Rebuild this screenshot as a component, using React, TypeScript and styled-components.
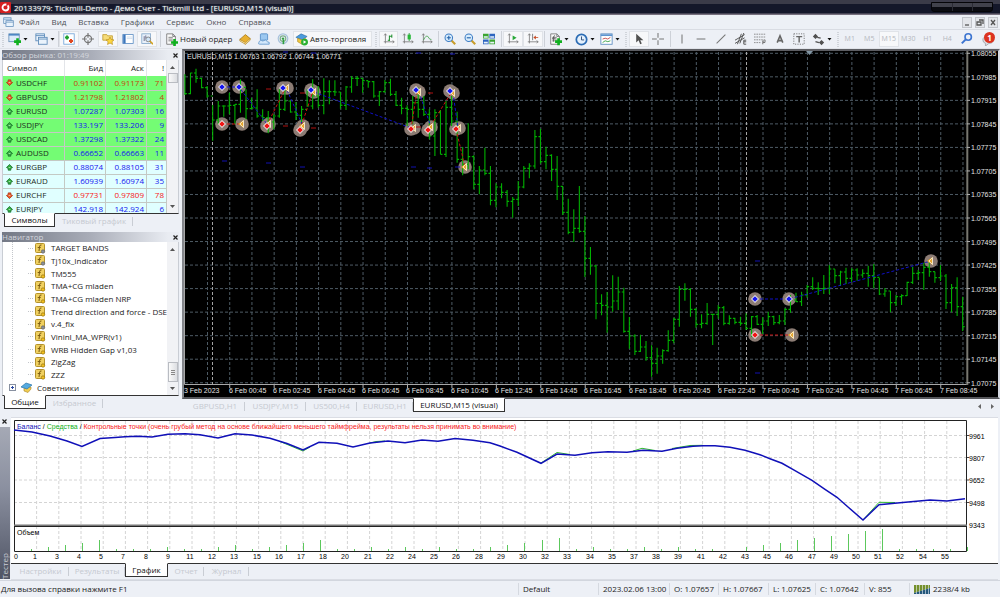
import React from "react";
import styled, { createGlobalStyle, css } from "styled-components";

const UI_FONT = `"Open Sans", "Noto Sans", sans-serif`;
const CHART_FONT = `"Liberation Sans", Arial, sans-serif`;

const Global = createGlobalStyle`
  * { box-sizing: border-box; }
  body { margin: 0; background: #edf0f6; }
  button, input { font: inherit; color: inherit; margin: 0; padding: 0; border: 0; background: none; }
`;

/* ---------- shell ---------- */

const Page = styled.div`
  display: flex;
  flex-direction: column;
  min-height: 100vh;
  font: 8px/12px ${UI_FONT};
  color: #1c1c1c;
  background: #edf0f6;
  overflow: hidden;
`;

const TitleBar = styled.header`
  display: flex;
  align-items: center;
  gap: 3px;
  height: 15px;
  color: #fff;
  background: linear-gradient(#3b3b49 0 4px, #14172a 4px 13px, #77707f 14px);
  text-shadow: 0 0 2px #9aa;
`;

const TitleText = styled.h1`
  flex: 1;
  margin: 0;
  font: inherit;
  font-weight: 500;
  white-space: nowrap;
`;

const CaptionButtons = styled.div`
  display: flex;
  margin: 0 7px 2px 0;
  height: 10px;
  border: 1px solid #050508;
  border-radius: 0 0 3px 3px;
  background: linear-gradient(#41424c 50%, #0b0c12 50%);
`;

const CaptionButton = styled.button`
  width: 20px;
  & + & {
    border-left: 1px solid #2c2d36;
  }
`;

const MenuBar = styled.nav`
  display: flex;
  align-items: center;
  gap: 12px;
  height: 15px;
  padding: 0 2px;
  color: #4d5057;
  border-bottom: 1px solid #d9dce3;
`;

const MenuItem = styled.button`
  white-space: nowrap;
`;

const MenuIcon = styled.span`
  display: flex;
  width: 12px;
  margin-right: -7px;
  padding-left: 1px;
`;

const MdiButtons = styled.div`
  display: flex;
  gap: 3px;
  margin-left: auto;
`;

const MdiButton = styled.button`
  display: flex;
  width: 10px;
  height: 11px;
  border: 1px solid #c2c5cb;
  background: #e3e5ea;
`;

/* ---------- toolbar ---------- */

const ToolBar = styled.div`
  display: flex;
  align-items: center;
  height: 19px;
  border-bottom: 1px solid #dfe2e8;
`;

const ToolGroup = styled.div<{ $w: number }>`
  display: flex;
  width: ${(p) => p.$w}px;
  height: 16px;
  & > * {
    flex: 1;
  }
`;

const pressedLook = css`
  background: #f7f8fa;
  box-shadow: inset 0 0 0 1px #e0e3e8;
`;

const ToolButton = styled.button<{ $pressed?: boolean; $muted?: boolean }>`
  display: flex;
  align-items: center;
  justify-content: center;
  gap: 2px;
  height: 16px;
  min-width: 0;
  white-space: nowrap;
  ${(p) => p.$muted && "color: #b4b7bd; font-size: 7px;"}
  ${(p) => p.$pressed && pressedLook}
`;

const TextTool = styled(ToolButton)<{ $w: number }>`
  justify-content: flex-start;
  width: ${(p) => p.$w}px;
  padding-left: 2px;
`;

const Separator = styled.span<{ $w: number }>`
  width: ${(p) => p.$w}px;
  height: 16px;
  background: linear-gradient(#cdd1d8, #cdd1d8) center / 1px 100% no-repeat;
`;

const Grip = styled.span<{ $w: number }>`
  width: ${(p) => p.$w}px;
  height: 15px;
  background: repeating-linear-gradient(#d0d4da 0 1px, transparent 1px 2px) center / 2px 100% no-repeat;
`;

const AlertButton = styled(ToolButton)`
  position: relative;
  width: 23px;
`;

const Badge = styled.span`
  position: absolute;
  left: 7px;
  top: 1px;
  width: 11px;
  height: 11px;
  border-radius: 50%;
  background: #dc3420;
  color: #fff;
  font-weight: 700;
  line-height: 11px;
  text-align: center;
`;

/* ---------- workspace ---------- */

const Workspace = styled.main`
  display: grid;
  grid-template-columns: 182px minmax(0, 1fr);
`;

const SideColumn = styled.aside`
  display: flex;
  flex-direction: column;
  gap: 3px;
  padding: 1px 3px 0 2px;
`;

const Panel = styled.section`
  display: flex;
  flex-direction: column;
`;

const PanelHead = styled.div`
  display: flex;
  align-items: center;
  justify-content: space-between;
  height: 10px;
  color: #d3d6dd;
  background: linear-gradient(90deg, #737885, #a9adb8 50%, #e9ecf2 94%);
`;

const CloseButton = styled.button`
  display: flex;
  width: 8px;
  height: 8px;
  align-items: center;
  justify-content: center;
`;

const PanelBody = styled.div<{ $h: number }>`
  display: flex;
  height: ${(p) => p.$h}px;
  background: #fff;
  border: solid #c9cdd4;
  border-width: 0 1px 0 1px;
  border-bottom: 1px solid #333;
  overflow: hidden;
`;

const ScrollBar = styled.div`
  position: relative;
  display: flex;
  flex-direction: column;
  align-items: center;
  width: 11px;
  padding: 6px 0 5px;
  background: #f1f2f5;
`;

const Thumb = styled.span<{ $h: number; $gap: string }>`
  width: 10px;
  height: ${(p) => p.$h}px;
  margin: ${(p) => p.$gap};
  border: 1px solid #b9bcc2;
  background: linear-gradient(90deg, #fafafa, #dcdee2);
`;

const GripThumb = styled(Thumb)`
  background: repeating-linear-gradient(#888 0 1px, transparent 1px 2px) center / 4px 5px no-repeat,
    linear-gradient(90deg, #fafafa, #dcdee2);
`;

const TabStrip = styled.div<{ $pad: number; $h: number }>`
  display: flex;
  height: ${(p) => p.$h}px;
  padding-left: ${(p) => p.$pad}px;
`;

const Tab = styled.button<{ $active?: boolean; $w: number }>`
  width: ${(p) => p.$w}px;
  height: 14px;
  line-height: 12px;
  white-space: nowrap;
  ${(p) =>
    p.$active
      ? css`
          color: #111;
          background: #fff;
          border: 1px solid #333;
          border-top-color: #fff;
          margin-top: -1px;
        `
      : css`
          color: #c5c9d0;
          background: linear-gradient(#c9cdd4, #c9cdd4) right / 1px 9px no-repeat;
        `}
`;

const QuoteTable = styled.table`
  flex: 1;
  height: 156px;
  border-collapse: collapse;
  table-layout: fixed;
  th {
    height: 16px;
    padding: 0 2px 0 4px;
    font-weight: 400;
    text-align: right;
    border-right: 1px solid #e3e5e9;
  }
  th:first-child {
    text-align: left;
  }
`;

const QuoteRow = styled.tr<{ $hot: boolean; $up: boolean }>`
  background: ${(p) => (p.$hot ? "#74fc74" : "#e0ffff")};
  td {
    height: 14px;
    padding: 0 2px 0 0;
    line-height: 12px;
    text-align: right;
    border: solid #c4c9c4;
    border-width: 0 1px 1px 0;
    color: ${(p) => (p.$up ? "#1414f0" : p.$hot ? "#c4420c" : "#f81414")};
  }
  td:first-child {
    text-align: left;
    color: #1c2c1c;
  }
`;

const SymbolCell = styled.span`
  display: flex;
  align-items: center;
  gap: 3px;
  padding-left: 3px;
`;

const Tree = styled.ul`
  display: grid;
  grid-template-rows: repeat(12, 1fr) 1px;
  flex: 1;
  min-width: 0;
  margin: 0;
  padding: 0;
  list-style: none;
  background: repeating-linear-gradient(#c3c6cb 0 1px, transparent 1px 2px) 9px 0 / 1px 138px no-repeat;
`;

const TreeItem = styled.li<{ $root?: boolean }>`
  display: flex;
  align-items: center;
  gap: ${(p) => (p.$root ? 4 : 5)}px;
  padding-left: ${(p) => (p.$root ? 6 : 25)}px;
  overflow: hidden;
  white-space: nowrap;
  svg {
    flex: none;
  }
`;

const ChartColumn = styled.div`
  display: flex;
  flex-direction: column;
`;

const ChartFrame = styled.div`
  background: #000;
  border: 2px solid;
  border-color: #5c5d62 #d6dae2 #55565a #85878c;
`;

const Plot = styled.svg`
  display: block;
  width: 100%;
  height: auto;
  font-family: ${CHART_FONT};
`;

const ChartTabs = styled.div`
  display: flex;
  align-items: flex-start;
  justify-content: space-between;
  height: 18px;
`;

const TabArrows = styled.div`
  display: flex;
  gap: 10px;
  padding: 5px 6px 0 0;
  button {
    display: flex;
  }
`;

/* ---------- tester ---------- */

const Tester = styled.section`
  display: grid;
  grid-template-columns: 11px minmax(0, 1fr);
  padding-right: 2px;
`;

const TesterRail = styled.div`
  display: flex;
  flex-direction: column;
  width: 10px;
`;

const RailLabel = styled.h2`
  flex: 1;
  margin: 2px 0 1px;
  padding-bottom: 1px;
  font: inherit;
  line-height: 10px;
  color: #c9ccd4;
  writing-mode: vertical-rl;
  transform: rotate(180deg);
  background: linear-gradient(#4f5464, #8b90a0 60%, #a5a9b5);
`;

const TesterBody = styled.div`
  border: 1px solid #dadde4;
  border-width: 1px 0;
`;

const TesterPlot = styled.div`
  background: #fff;
  border-bottom: 1px solid #333;
`;

const StatusBar = styled.footer`
  display: flex;
  align-items: center;
  height: 17px;
  border-top: 1px solid #d2d6de;
  white-space: nowrap;
`;

const StatusCell = styled.span<{ $w?: number }>`
  ${(p) => (p.$w ? `width: ${p.$w}px; padding-left: 4px; border-left: 1px solid #d5d9e0;` : "flex: 1; padding-left: 1px;")}
  display: flex;
  align-items: center;
  gap: 3px;
`;

/* ---------- icons ---------- */

type IconName = keyof typeof ICONS;

const plus = (x: number, y: number) => (
  <path d={`M${x - 4} ${y}h8M${x} ${y - 4}v8`} stroke="#10b020" strokeWidth="3" />
);
const axes = <path d="M3 1v12M1 11h13M1.500 3L3 1l1.500 2M12 9.500l2 1.500-2 1.500" stroke="#777" fill="none" />;
const doc = <path d="M2 1h7l3 3v9H2zM4 5h5M4 7h5M4 9h5M9 1v3h3" fill="#fafafa" stroke="#777" />;

const ICONS = {
  newChart: (
    <>
      <rect x="1" y="1" width="12" height="9" fill="#dceafa" stroke="#6d93b8" />
      <path d="M1 2h12" stroke="#4d86c4" strokeWidth="2" />
      {plus(11, 10)}
    </>
  ),
  profiles: (
    <g fill="#eaf3fc" stroke="#5c8ab8">
      <rect x="1" y="1" width="10" height="8" />
      <rect x="4" y="5" width="10" height="8" />
      <path d="M1 3h10M4 7h10" />
    </g>
  ),
  market: (
    <>
      <rect x="1" y="1" width="13" height="13" fill="#fff" stroke="#6ba0d8" />
      <path d="M2.500 5.500h5M5 3v5" stroke="#20a030" strokeWidth="2.500" />
      <path d="M7.500 10h5M10 7.500v5" stroke="#e04820" strokeWidth="2.500" />
    </>
  ),
  target: (
    <g fill="none" stroke="#777" strokeWidth="1.500">
      <circle cx="7.500" cy="7.500" r="4.500" />
      <path d="M7.500 0v6M7.500 9v6M0 7.500h6M9 7.500h6" />
    </g>
  ),
  navigator: (
    <>
      <path d="M1 2h5l1 1.500h6V9H1z" fill="#f6dc78" stroke="#c09a30" />
      <path d="M10 5l1.600 3.200 3.400.4-2.500 2.300.7 3.400-3.200-1.700-3.100 1.700.7-3.400L5 8.600l3.400-.4z" fill="#fcd640" stroke="#b88a20" strokeWidth=".8" />
    </>
  ),
  terminal: (
    <>
      <rect x="1" y="2" width="13" height="11" fill="#fff" stroke="#5a8cc4" />
      <path d="M3 2v11" stroke="#3c76bc" strokeWidth="3" />
      <path d="M6 5h7M6 7h7" stroke="#c8d8ea" />
    </>
  ),
  tester: (
    <>
      <rect x="1" y="1" width="11" height="12" fill="#e8f0fa" stroke="#7fa4c8" />
      <path d="M4 4v6M6 3v4M8 5v4" stroke="#557" />
      <circle cx="9" cy="8" r="3" fill="#cfe4f8" stroke="#777" />
      <path d="M11 10l4 4" stroke="#d0a020" strokeWidth="2" />
    </>
  ),
  order: (
    <>
      {doc}
      {plus(11, 11)}
    </>
  ),
  book: (
    <>
      <path d="M1 8l7-6 6 5-6 7z" fill="#e8b030" stroke="#a87818" />
      <path d="M1 8l7 4 6-5v2l-6 5-7-4z" fill="#fbe7a0" stroke="#a87818" strokeWidth=".7" />
    </>
  ),
  vps: (
    <>
      <rect x="3" y="1" width="9" height="8" rx="1" fill="#9cc8f0" stroke="#4c88c4" />
      <path d="M1 12q1-4 5-2 4-3 6 1 3 0 2 3H2q-2 0-1-2z" fill="#d4e8fb" stroke="#5c94cc" />
    </>
  ),
  signal: (
    <g fill="none">
      <circle cx="7.500" cy="7" r="6" stroke="#a9c3dc" strokeWidth="1.500" />
      <circle cx="7.500" cy="7" r="3.500" stroke="#7fae8c" strokeWidth="1.500" />
      <circle cx="7.500" cy="7" r="1.500" fill="#30a040" />
      <path d="M8 8v6" stroke="#30a040" strokeWidth="2" />
    </g>
  ),
  auto: (
    <>
      <path d="M1 5l6-4 7 3-6 4z" fill="#4c9cdc" stroke="#2c6ca4" strokeWidth=".7" />
      <path d="M3 6v4l5 3 4-5V6L8 8z" fill="#f0c840" stroke="#a88420" strokeWidth=".7" />
      <circle cx="11" cy="10.500" r="4" fill="#28b030" />
      <path d="M9.800 8.500l3.200 2-3.200 2z" fill="#fff" />
    </>
  ),
  bars: (
    <>
      {axes}
      <path d="M8 3v7M6 9h2M8 4h3M11 2v4" stroke="#209030" strokeWidth="1.300" />
    </>
  ),
  candles: (
    <>
      {axes}
      <path d="M9 0v10" stroke="#209030" />
      <rect x="7" y="2" width="4" height="6" fill="#28b838" />
    </>
  ),
  line: (
    <>
      {axes}
      <path d="M3 9q4-8 6-4t4 3" stroke="#40a048" fill="none" />
    </>
  ),
  zoomIn: (
    <>
      <path d="M9 9l5 5" stroke="#c89c28" strokeWidth="2.500" />
      <circle cx="6" cy="6" r="4.700" fill="#d8ecfc" stroke="#3c7cc4" strokeWidth="1.300" />
      <path d="M3.500 6h5M6 3.500v5" stroke="#2060a8" strokeWidth="1.400" />
    </>
  ),
  zoomOut: (
    <>
      <path d="M9 9l5 5" stroke="#c89c28" strokeWidth="2.500" />
      <circle cx="6" cy="6" r="4.700" fill="#d8ecfc" stroke="#3c7cc4" strokeWidth="1.300" />
      <path d="M3.500 6h5" stroke="#2060a8" strokeWidth="1.400" />
    </>
  ),
  tile: (
    <>
      <path d="M0 1h7v6H0zM8 8h7v6H8z" fill="#3aa430" />
      <path d="M8 1h7v6H8zM0 8h7v6H0z" fill="#2c64c0" />
      <path d="M1 4h5v2H1zM9 4h5v2H9zM1 11h5v2H1zM9 11h5v2H9z" fill="#e8f2fa" />
    </>
  ),
  scroll: (
    <>
      {axes}
      <path d="M7 3l5 3-5 3z" fill="#28a838" />
    </>
  ),
  shift: (
    <>
      {axes}
      <path d="M7 1v8" stroke="#666" />
      <path d="M8 5.500l3-2.500v2h3v1h-3v2z" fill="#c84820" />
    </>
  ),
  indicators: (
    <>
      {doc}
      <path d="M7 3q-2 0-2 3v4M3.500 6h4" stroke="#555" fill="none" />
      {plus(11, 10)}
    </>
  ),
  clock: (
    <>
      <circle cx="7.500" cy="7.500" r="6" fill="#e4f0fc" stroke="#2c6cb4" strokeWidth="2" />
      <path d="M7.500 4v4h3" stroke="#1c3c6c" fill="none" />
    </>
  ),
  template: (
    <>
      <rect x="1" y="1" width="13" height="12" fill="#fff" stroke="#5c8cc0" />
      <path d="M1 2.500h13" stroke="#5c94d0" strokeWidth="2" />
      <path d="M3 7l3-1 3 1 3-2" stroke="#c04040" fill="none" />
      <path d="M3 11l3-2 3 1 3-1" stroke="#30a040" fill="none" />
    </>
  ),
  cursor: <path d="M4 1v11l3-3 2 5 2-1-2-4h4z" fill="#505050" />,
  cross: <path d="M7.500 0v6M7.500 9v6M0 7.500h6M9 7.500h6" stroke="#777" strokeWidth="1.300" />,
  vline: <path d="M7.500 2v11" stroke="#777" strokeWidth="1.300" />,
  hline: <path d="M2 7.500h11" stroke="#777" strokeWidth="1.300" />,
  trend: <path d="M2 13L13 2" stroke="#777" strokeWidth="1.300" />,
  channel: (
    <path d="M0 9l12-7M0 13l12-7M3 14L8 1M6 13L11 0M11 9v5h3M11 11h3M11 9h3" stroke="#555" fill="none" strokeWidth="1.200" />
  ),
  fibo: (
    <g stroke="#777" fill="none">
      <path d="M0 1.500h15M0 5h15M0 8.500h15M0 12h9" strokeDasharray="2 1" />
      <path d="M11 14v-4h4M11 12h3" strokeWidth="1.300" />
    </g>
  ),
  textA: <path d="M4 12l3.500-8.500L11 12M5.500 9.500h4" stroke="#666" strokeWidth="2" fill="none" />,
  label: (
    <g stroke="#666" fill="none">
      <rect x="1" y="1" width="13" height="13" strokeDasharray="1.500 1.500" />
      <path d="M4 4.500h7.500M7.700 4v8" strokeWidth="1.800" />
    </g>
  ),
  arrows: (
    <g fill="#505050">
      <path d="M4 1l3 3-3 3-3-3zM11 8l3 3-3 3-3-3z" />
      <path d="M6 5l4 1M4 10l4 1" stroke="#505050" strokeWidth="1.500" />
    </g>
  ),
  search: (
    <g fill="none" stroke="#3c74d0" strokeWidth="2">
      <circle cx="9" cy="5" r="4" />
      <path d="M6 8l-5 5" strokeWidth="2.500" />
    </g>
  ),
  bubble: <path d="M1 8q0-4 6-4t6 4-5 4l-4 3v-3Q1 11 1 8z" fill="#dcdee2" stroke="#a0a4aa" />,
};

const Icon = ({ name, size = 12 }: { name: IconName; size?: number }) => (
  <svg width={size} height={size} viewBox="0 0 15 15" aria-hidden="true">
    {ICONS[name]}
  </svg>
);

const Caret = () => (
  <svg width="5" height="3" viewBox="0 0 5 3" aria-hidden="true">
    <path d="M.5 0h4L2.500 2.500z" fill="#111" />
  </svg>
);

const ScrollArrow = ({ up }: { up?: boolean }) => (
  <svg width="5" height="3" viewBox="0 0 5 3" aria-hidden="true">
    <path d={up ? "M0 3h5L2.500 0z" : "M0 0h5L2.500 3z"} fill="#555" />
  </svg>
);

const CrossGlyph = () => (
  <svg width="5" height="5" viewBox="0 0 5 5" aria-hidden="true">
    <path d="M.5.5l4 4M4.500.5l-4 4" stroke="#222" strokeWidth="1.200" />
  </svg>
);

const Direction = ({ up }: { up: boolean }) => (
  <svg width="7" height="7" viewBox="0 0 8 8" aria-hidden="true">
    <path
      d={up ? "M4 .5L7.500 4 5.500 5v2h-3V5L.5 4z" : "M4 7.500L7.500 4 5.500 3V1h-3v2L.5 4z"}
      fill={up ? "#30b040" : "#f05828"}
      stroke={up ? "#1c6c2c" : "#a83010"}
      strokeWidth=".9"
    />
    <path d="M3 4h2" stroke="#d8f0d0" strokeWidth=".8" />
  </svg>
);

const ScriptIcon = ({ grey }: { grey?: boolean }) => (
  <svg width="18" height="11" viewBox="0 0 18 11" aria-hidden="true">
    <path d="M0 5.500h6" stroke="#c3c6cb" strokeDasharray="1 1" />
    <rect x="7.500" y=".5" width="9" height="9" rx="1" fill="#f0d060" stroke="#b4922c" />
    <path d="M13.500 2q-2-.5-2 2L11 8M9.700 4.500h3" stroke="#7c5c10" fill="none" />
    <circle cx="15" cy="8.500" r="1.700" fill={grey ? "#8c9098" : "#f4c020"} stroke={grey ? "#60646c" : "#947410"} strokeWidth=".7" />
  </svg>
);

/* ---------- data ---------- */

const QUOTES: [string, string, string, number, boolean][] = [
  ["USDCHF", "0.91102", "0.91173", 71, false],
  ["GBPUSD", "1.21798", "1.21802", 4, false],
  ["EURUSD", "1.07287", "1.07303", 16, true],
  ["USDJPY", "133.197", "133.206", 9, true],
  ["USDCAD", "1.37298", "1.37322", 24, true],
  ["AUDUSD", "0.66652", "0.66663", 11, true],
  ["EURGBP", "0.88074", "0.88105", 31, true],
  ["EURAUD", "1.60939", "1.60974", 35, true],
  ["EURCHF", "0.97731", "0.97809", 78, false],
  ["EURJPY", "142.918", "142.924", 6, true],
];

const SCRIPTS = [
  "TARGET BANDS",
  "Tj10x_Indicator",
  "TM555",
  "TMA+CG mladen",
  "TMA+CG mladen NRP",
  "Trend direction and force - DSEI",
  "v.4_fix",
  "VininI_MA_WPR(v1)",
  "WRB Hidden Gap v1,03",
  "ZigZag",
  "ZZZ",
];
const GREY_SCRIPTS = [0, 1, 6];

/* High, low and close of each bar, in thirds of a chart unit below the top. */
const BARS: [number, number, number][] = [
  [85, 147, 143], [80, 145, 81], [68, 110, 97], [95, 127, 125], [120, 155, 150],
  [177, 284, 222], [165, 235, 180], [178, 212, 180], [140, 205, 178], [175, 235, 175],
  [100, 200, 124], [130, 220, 188], [155, 190, 186], [130, 215, 210], [190, 225, 215],
  [195, 262, 228], [205, 250, 210], [130, 215, 190], [130, 195, 165], [165, 200, 198],
  [168, 222, 208], [180, 235, 190], [130, 182, 180], [100, 190, 150], [120, 185, 178],
  [97, 205, 137], [103, 175, 137], [103, 150, 138], [138, 188, 178], [120, 192, 123],
  [90, 140, 97], [90, 120, 97], [97, 140, 104], [105, 125, 107], [105, 155, 150],
  [135, 180, 137], [102, 140, 110], [98, 150, 145], [135, 180, 178], [155, 205, 187],
  [178, 240, 190], [150, 235, 170], [125, 215, 190], [150, 210, 205], [190, 280, 270],
  [190, 330, 200], [192, 325, 325], [165, 333, 184], [150, 240, 225], [197, 350, 340],
  [303, 388, 355], [232, 370, 332], [328, 430, 415], [360, 445, 372], [305, 388, 382],
  [360, 478, 463], [412, 484, 423], [412, 457, 439], [432, 482, 466], [453, 515, 460],
  [405, 480, 423], [360, 427, 367], [352, 397, 360], [252, 368, 272], [248, 353, 347],
  [302, 370, 328], [325, 405, 370], [330, 462, 421], [420, 507, 499], [458, 565, 559],
  [490, 588, 547], [420, 560, 556], [510, 693, 637], [603, 686, 660], [657, 820, 772],
  [745, 808, 778], [738, 860, 783], [688, 797, 765], [692, 792, 738], [725, 860, 856],
  [813, 908, 870], [865, 927, 916], [866, 918, 903], [885, 944, 935], [898, 992, 952],
  [905, 983, 930], [910, 953, 914], [853, 917, 883], [815, 892, 820], [720, 842, 730],
  [712, 764, 730], [727, 812, 790], [787, 845, 835], [805, 847, 832], [771, 836, 805],
  [805, 897, 805], [777, 818, 785], [780, 838, 832], [808, 836, 817], [815, 835, 829],
  [812, 839, 832], [802, 852, 847], [810, 872, 812], [807, 837, 835], [814, 864, 825],
  [797, 840, 812], [809, 837, 830], [807, 835, 825], [787, 837, 790], [747, 800, 762],
  [740, 768, 767], [737, 780, 747], [717, 755, 722], [694, 732, 727], [709, 747, 728],
  [687, 744, 727], [657, 744, 669], [670, 712, 689], [674, 720, 678], [665, 714, 697],
  [667, 707, 672], [667, 704, 687], [670, 695, 682], [659, 722, 689], [654, 727, 694],
  [696, 747, 744], [726, 752, 735], [735, 799, 770], [747, 780, 752], [745, 777, 749],
  [707, 750, 709], [662, 714, 682], [672, 702, 680], [650, 732, 664], [647, 692, 677],
  [677, 710, 695], [657, 705, 690], [684, 789, 770], [714, 799, 725], [694, 810, 782],
  [752, 855, 842],
];

const PRICES = [
  "1.08055", "1.07985", "1.07915", "1.07845", "1.07775", "1.07705", "1.07635", "1.07565",
  "1.07495", "1.07425", "1.07355", "1.07285", "1.07215", "1.07145", "1.07075",
];

const TIMES = [
  "6 Feb 00:45", "6 Feb 02:45", "6 Feb 04:45", "6 Feb 06:45", "6 Feb 08:45", "6 Feb 10:45",
  "6 Feb 12:45", "6 Feb 14:45", "6 Feb 16:45", "6 Feb 18:45", "6 Feb 20:45", "6 Feb 22:45",
  "7 Feb 00:45", "7 Feb 02:45", "7 Feb 04:45", "7 Feb 06:45", "7 Feb 08:45",
];

type Kind = "b" | "r" | "y";
const MARKERS: [Kind, number, number][] = [
  ["b", 222, 87], ["b", 239, 87], ["y", 287, 88], ["b", 283, 88], ["y", 314, 92], ["b", 311, 90],
  ["y", 419, 92], ["b", 416, 90], ["y", 453, 93], ["b", 450, 91], ["r", 222, 124], ["y", 242, 124],
  ["y", 269, 124], ["r", 267, 126], ["y", 303, 126], ["r", 300, 130], ["y", 414, 128], ["r", 411, 129],
  ["y", 431, 127], ["r", 428, 130], ["y", 459, 128], ["r", 456, 129], ["y", 465, 167],
  ["b", 755, 299], ["b", 789, 299], ["r", 755, 335], ["y", 792, 335], ["y", 931, 261],
];

const BLUE_PATHS =
  "M222 87H239L267 124M287 90L303 126M314 92L411 128M419 92L431 127M453 93L458 128M755 299H789L931 261";
const RED_PATHS =
  "M222 124H242M267 125L285 89M300 130L313 91M411 129L417 91M428 130L451 93M456 129L465 167M755 335H792";
const BLUE_TICKS = [
  [224, 161], [268, 163], [302, 167], [413, 167], [429, 168], [457, 167], [285, 52], [313, 53],
  [418, 53], [452, 54], [757, 261], [757, 373],
];
const RED_TICKS = [
  [268, 89], [302, 93], [285, 126], [313, 128], [430, 93], [418, 127],
];

const TRADE_NUMBERS = [
  0, 1, 3, 4, 5, 7, 8, 9, 11, 12, 13, 15, 16, 17, 18, 20, 21, 22, 24, 25, 26, 28, 29, 30, 32, 33,
  34, 35, 37, 38, 39, 41, 42, 43, 45, 46, 47, 49, 50, 51, 52, 54, 55,
];

const BALANCE =
  "14,430 32,432 50,436 67,441 82,446.500 100,438.500 115,437.500 125,436.700 138,436.300 152,437 168,434.300 185,433.700 200,434.700 218,438 235,433.700 252,435 270,438.300 287,443.500 303,450 319,442.300 337,443.300 353,447 370,443 388,441 405,442.700 422,440 438,441.300 455,438.500 473,440.300 490,442.700 500,446 517,452.300 541,463.300 557,454 575,455.300 592,452.700 608,451.700 627,452.300 643,450.300 662,451.300 677,448.300 693,446.300 703,445.700 715,445.700 730,447.300 745,450.300 760,454.700 770,458.700 782,463.300 795,470.700 812,480.300 825,489.300 837,497.300 848,507 863,520 879,504.700 900,502.700 930,500 947,501 965,498.700";

const VOLUMES = [
  2, 4, 6, 8, 11, 2, 2, 2, 4, 2, 2, 4, 6, 2, 4, 6, 8, 11, 2, 2, 4, 2, 4, 2, 4, 2, 2, 4, 6, 8, 11,
  13, 2, 4, 2, 2, 4, 2, 4, 2, 2, 4, 6, 8, 11, 13, 15, 17, 20, 22, 2, 2, 2, 2, 4,
];

/* ---------- charts ---------- */

const gridX = (k: number) => 207.5 + k * 22.22;
const gridY = (k: number) => 53.3 + k * 23.53;
const barX = (i: number) => 184.9 + i * 5.5555;
const barY = (v: number) => 46 + v / 3;

const Marker = ({ kind, x, y }: { kind: Kind; x: number; y: number }) => (
  <g transform={`translate(${x} ${y})`}>
    {kind === "y" ? (
      <>
        <path d="M-4 0L1.500-4V4z" fill="#e8a830" />
        <path d="M-2 0L1.500-3.500V3.500z" fill="none" stroke="#f8ecd0" strokeWidth=".9" />
      </>
    ) : (
      <>
        <path d="M-4 0L0-4 4 0 0 4z" fill="#f0ecec" />
        <path d="M-2.800 0L0-2.800 2.800 0 0 2.800z" fill={kind === "b" ? "#1414f0" : "#f01414"} />
      </>
    )}
  </g>
);

const PriceChart = () => (
  <Plot viewBox="184 51 814 346" role="img" aria-label="EURUSD,M15">
    <g stroke="#4e5b65" strokeWidth="1" strokeDasharray="3 2">
      {Array.from({ length: 35 }, (_, k) => (
        <path key={k} d={`M${gridX(k)} 52V384`} />
      ))}
      {PRICES.map((p, k) => (
        <path key={p} d={`M185 ${gridY(k)}H967`} />
      ))}
    </g>
    <path d="M212.500 52V384M746.500 52V384" stroke="#a4a4a4" strokeDasharray="3 2" />
    <path d="M184.500 51V384.500H967.500" stroke="#a8a8a8" fill="none" />
    <path d="M967.300 51V385" stroke="#77776f" strokeWidth="2" />
    <path
      d={PRICES.map((_, k) => `M967 ${gridY(k)}h3`).join("") + TIMES.map((_, k) => `M${gridX(2 * k + 1)} 385v3`).join("")}
      stroke="#b0b0b0"
    />
    <path d="M806 51h7l-3.500 4z" fill="#8296a4" />
    <g fill="#8c7c74">
      {MARKERS.map(([, x, y]) => (
        <circle key={`${x}-${y}`} cx={x} cy={y} r="6.800" />
      ))}
    </g>
    <path
      d={BARS.map(([h, l, c], i) => {
        const open = i ? `M${barX(i) - 2} ${barY(BARS[i - 1][2])}h2` : "";
        return `M${barX(i)} ${barY(h)}V${barY(l)}${open}M${barX(i)} ${barY(c)}h2`;
      }).join("")}
      stroke="#00b000"
      fill="none"
      strokeWidth="1.100"
    />
    <path d={BLUE_PATHS} stroke="#1010c8" fill="none" strokeDasharray="3 2" />
    <path d={RED_PATHS} stroke="#c81010" fill="none" strokeDasharray="3 2" />
    <path d={BLUE_TICKS.map(([x, y]) => `M${x - 2} ${y}h5`).join("")} stroke="#1010b0" />
    <path d={RED_TICKS.map(([x, y]) => `M${x - 2} ${y}h5`).join("")} stroke="#b01010" />
    {MARKERS.map(([kind, x, y]) => (
      <Marker key={`${x}-${y}`} kind={kind} x={x} y={y} />
    ))}
    <g fill="#e4e4e4" fontSize="7">
      <text x="187" y="59">
        EURUSD,M15 1.06763 1.06792 1.06744 1.06771
      </text>
      {PRICES.map((p, k) => (
        <text key={p} x="971" y={Math.round(gridY(k)) + 3}>
          {p}
        </text>
      ))}
      <text x="184" y="393">
        3 Feb 2023
      </text>
      {TIMES.map((t, k) => (
        <text key={t} x={Math.round(gridX(2 * k + 1)) - 1} y="393">
          {t}
        </text>
      ))}
    </g>
  </Plot>
);

const testX = (k: number) => 14.4 + k * 22.2;

const BalanceChart = () => (
  <Plot viewBox="11 418 987 145" role="img" aria-label="Баланс">
    <g stroke="#d4d4d4" strokeDasharray="3 2">
      {TRADE_NUMBERS.slice(1).map((n, k) => (
        <path key={n} d={`M${testX(k + 1)} 421V551`} />
      ))}
      {[435.500, 457.500, 480, 502.500].map((y) => (
        <path key={y} d={`M14 ${y}H967`} />
      ))}
    </g>
    <path
      d={VOLUMES.map((v, k) => `M${Math.floor(31.4 + k * 17.02 + (k > 40 ? 17 : 0))}.500 551v-${v}`).join("")}
      stroke="#5cc85c"
    />
    <path d="M14.500 420.500H966.500V551.500H14.500z" stroke="#222" fill="none" />
    <path d="M14 525.500H967" stroke="#777" strokeWidth="2" />
    <path d="M14 526.500H967" stroke="#222" />
    <path d="M967 435.500h2M967 457.500h2M967 480h2M967 502.500h2" stroke="#444" />
    <path
      d="M280 441.500L303 451L310 447M370 443L376 441.500 385 441M541 463L557 452.500 570 454.500M633 451L642 448.300 655 450.500M672 448.500L690 445.500 703 445.300M863 520L879 502.300 895 502.500"
      stroke="#30b830"
      fill="none"
    />
    <polyline points={BALANCE} stroke="#1010b8" strokeWidth="1.500" fill="none" />
    <g fontSize="7">
      <text x="17" y="429">
        <tspan fill="#1010b8">Баланс</tspan> / <tspan fill="#10b020">Средства</tspan> /{" "}
        <tspan fill="#f81818">
          Контрольные точки (очень грубый метод на основе ближайшего меньшего таймфрейма, результаты нельзя принимать во внимание)
        </tspan>
      </text>
      <text x="17" y="535">
        Объем
      </text>
      {["9961", "9807", "9652", "9498", "9343"].map((t, k) => (
        <text key={t} x="969" y={439 + Math.round(k * 22.2)}>
          {t}
        </text>
      ))}
      {TRADE_NUMBERS.map((n, k) => (
        <text key={n} x={k ? Math.round(testX(k)) - 2 : 16} y="559" textAnchor="middle">
          {n}
        </text>
      ))}
    </g>
  </Plot>
);

/* ---------- page ---------- */

const Tool = ({ icon, label, pressed, menu }: { icon: IconName; label: string; pressed?: boolean; menu?: boolean }) => (
  <ToolButton aria-label={label} $pressed={pressed} aria-pressed={pressed}>
    <Icon name={icon} size={menu ? 13 : 12} />
    {menu && <Caret />}
  </ToolButton>
);

export default function App() {
  return (
    <Page>
      <Global />
      <TitleBar>
        <svg width="11" height="11" viewBox="0 0 11 11" aria-hidden="true">
          <rect width="11" height="11" rx="1" fill="#d42020" />
          <circle cx="5.500" cy="5.500" r="3" fill="none" stroke="#fff" strokeWidth="1.800" />
          <path d="M7 0l2 3-3 1z" fill="#d42020" />
        </svg>
        <TitleText>20133979: Tickmill-Demo - Демо Счет - Tickmill Ltd - [EURUSD,M15 (visual)]</TitleText>
        <CaptionButtons>
          <CaptionButton aria-label="Свернуть" />
          <CaptionButton aria-label="Развернуть" />
          <CaptionButton aria-label="Закрыть" />
        </CaptionButtons>
      </TitleBar>

      <MenuBar>
        <MenuIcon>
          <Icon name="profiles" size={11} />
        </MenuIcon>
        {["Файл", "Вид", "Вставка", "Графики", "Сервис", "Окно", "Справка"].map((m) => (
          <MenuItem key={m}>{m}</MenuItem>
        ))}
        <MdiButtons>
          {["M2 7h4", "M3 2h4v4M1 4h4v3H1z", "M2 2l4 5M6 2L2 7"].map((d) => (
            <MdiButton key={d} aria-label="Окно">
              <svg width="8" height="9" viewBox="0 0 8 9" aria-hidden="true">
                <path d={d} stroke="#555" strokeWidth="1.300" fill="none" />
              </svg>
            </MdiButton>
          ))}
        </MdiButtons>
      </MenuBar>

      <ToolBar>
        <Grip $w={5} />
        <ToolGroup $w={53}>
          <Tool icon="newChart" label="Новый график" menu />
          <Tool icon="profiles" label="Профили" menu />
        </ToolGroup>
        <Separator $w={1} />
        <ToolGroup $w={98}>
          <Tool icon="market" label="Обзор рынка" pressed />
          <Tool icon="target" label="Окно данных" />
          <Tool icon="navigator" label="Навигатор" pressed />
          <Tool icon="terminal" label="Терминал" />
          <Tool icon="tester" label="Тестер" pressed />
        </ToolGroup>
        <Separator $w={6} />
        <TextTool $w={72}>
          <Icon name="order" size={13} />
          Новый ордер
        </TextTool>
        <ToolGroup $w={58}>
          <Tool icon="book" label="MetaEditor" />
          <Tool icon="vps" label="VPS" />
          <Tool icon="signal" label="Сигналы" />
        </ToolGroup>
        <TextTool $w={79} $pressed>
          <Icon name="auto" size={13} />
          Авто-торговля
        </TextTool>
        <Grip $w={7} />
        <ToolGroup $w={58}>
          <Tool icon="bars" label="Бары" pressed />
          <Tool icon="candles" label="Свечи" />
          <Tool icon="line" label="Линия" />
        </ToolGroup>
        <Separator $w={3} />
        <ToolGroup $w={59}>
          <Tool icon="zoomIn" label="Увеличить" />
          <Tool icon="zoomOut" label="Уменьшить" />
          <Tool icon="tile" label="Окна мозаикой" />
        </ToolGroup>
        <Separator $w={4} />
        <ToolGroup $w={40}>
          <Tool icon="scroll" label="Автопрокрутка" pressed />
          <Tool icon="shift" label="Сдвиг графика" pressed />
        </ToolGroup>
        <Separator $w={3} />
        <ToolGroup $w={77}>
          <Tool icon="indicators" label="Индикаторы" menu />
          <Tool icon="clock" label="Периоды" menu />
          <Tool icon="template" label="Шаблоны" menu />
        </ToolGroup>
        <Grip $w={6} />
        <ToolGroup $w={39}>
          <Tool icon="cursor" label="Курсор" pressed />
          <Tool icon="cross" label="Перекрестие" />
        </ToolGroup>
        <Separator $w={4} />
        <ToolGroup $w={137}>
          <Tool icon="vline" label="Вертикальная линия" />
          <Tool icon="hline" label="Горизонтальная линия" />
          <Tool icon="trend" label="Трендовая линия" />
          <Tool icon="channel" label="Канал" />
          <Tool icon="fibo" label="Фибоначчи" />
          <Tool icon="textA" label="Текст" />
          <Tool icon="label" label="Метка" />
        </ToolGroup>
        <ToolGroup $w={26}>
          <Tool icon="arrows" label="Стрелки" menu />
        </ToolGroup>
        <Grip $w={5} />
        <ToolGroup $w={117}>
          {["M1", "M5", "M15", "M30", "H1", "H4"].map((t) => (
            <ToolButton key={t} $muted $pressed={t === "M15"}>
              {t}
            </ToolButton>
          ))}
        </ToolGroup>
        <ToolGroup $w={20}>
          <Tool icon="search" label="Поиск" />
        </ToolGroup>
        <AlertButton aria-label="Сообщения">
          <Icon name="bubble" size={13} />
          <Badge>1</Badge>
        </AlertButton>
      </ToolBar>

      <Workspace>
        <SideColumn>
          <Panel>
            <PanelHead>
              <span>Обзор рынка: 01:19:49</span>
              <CloseButton aria-label="Закрыть">
                <CrossGlyph />
              </CloseButton>
            </PanelHead>
            <PanelBody $h={154}>
              <QuoteTable>
                <colgroup>
                  <col />
                  <col width="41" />
                  <col width="41" />
                  <col width="20" />
                </colgroup>
                <thead>
                  <tr>
                    <th>Символ</th>
                    <th>Бид</th>
                    <th>Аск</th>
                    <th>!</th>
                  </tr>
                </thead>
                <tbody>
                  {QUOTES.map(([symbol, bid, ask, spread, up], i) => (
                    <QuoteRow key={symbol} $hot={i < 6} $up={up}>
                      <td>
                        <SymbolCell>
                          <Direction up={up} />
                          {symbol}
                        </SymbolCell>
                      </td>
                      <td>{bid}</td>
                      <td>{ask}</td>
                      <td>{spread}</td>
                    </QuoteRow>
                  ))}
                </tbody>
              </QuoteTable>
              <ScrollBar>
                <ScrollArrow up />
                <Thumb $h={10} $gap="4px 0 auto" />
                <ScrollArrow />
              </ScrollBar>
            </PanelBody>
            <TabStrip $pad={2} $h={15}>
              <Tab $active $w={51}>
                Символы
              </Tab>
              <Tab $w={78}>Тиковый график</Tab>
            </TabStrip>
          </Panel>

          <Panel>
            <PanelHead>
              <span>Навигатор</span>
              <CloseButton aria-label="Закрыть">
                <CrossGlyph />
              </CloseButton>
            </PanelHead>
            <PanelBody $h={154}>
              <Tree>
                {SCRIPTS.map((s, i) => (
                  <TreeItem key={s}>
                    <ScriptIcon grey={GREY_SCRIPTS.includes(i)} />
                    {s}
                  </TreeItem>
                ))}
                <TreeItem $root>
                  <svg width="7" height="7" viewBox="0 0 7 7" aria-hidden="true">
                    <rect x=".5" y=".5" width="6" height="6" fill="#fff" stroke="#8890a0" />
                    <path d="M2 3.500h3M3.500 2v3" stroke="#2848a0" />
                  </svg>
                  <svg width="13" height="11" viewBox="0 0 13 11" aria-hidden="true">
                    <path d="M4 5v4l4 1.500L11 7V5z" fill="#f0cc50" stroke="#a88428" strokeWidth=".6" />
                    <path d="M1 5l5-4 6 2-5 4z" fill="#54aae0" stroke="#2c74a8" strokeWidth=".7" />
                  </svg>
                  Советники
                </TreeItem>
              </Tree>
              <ScrollBar>
                <ScrollArrow up />
                <GripThumb $h={20} $gap="auto 0 5px" />
                <ScrollArrow />
              </ScrollBar>
            </PanelBody>
            <TabStrip $pad={2} $h={18}>
              <Tab $active $w={42}>
                Общие
              </Tab>
              <Tab $w={57}>Избранное</Tab>
            </TabStrip>
          </Panel>
        </SideColumn>

        <ChartColumn>
          <ChartFrame>
            <PriceChart />
          </ChartFrame>
          <ChartTabs>
            <TabStrip $pad={3} $h={14}>
              <Tab $w={60}>GBPUSD,H1</Tab>
              <Tab $w={61}>USDJPY,M15</Tab>
              <Tab $w={51}>US500,H4</Tab>
              <Tab $w={56}>EURUSD,H1</Tab>
              <Tab $active $w={92}>
                EURUSD,M15 (visual)
              </Tab>
            </TabStrip>
            <TabArrows>
              {["M3 0v5L0 2.500z", "M0 0v5l3-2.500z"].map((d) => (
                <button key={d} aria-label="Прокрутить вкладки">
                  <svg width="3" height="5" viewBox="0 0 3 5" aria-hidden="true">
                    <path d={d} fill="#666" />
                  </svg>
                </button>
              ))}
            </TabArrows>
          </ChartTabs>
        </ChartColumn>
      </Workspace>

      <Tester>
        <TesterRail>
          <CloseButton aria-label="Закрыть">
            <CrossGlyph />
          </CloseButton>
          <RailLabel>Тестер</RailLabel>
        </TesterRail>
        <TesterBody>
          <TesterPlot>
            <BalanceChart />
          </TesterPlot>
          <TabStrip $pad={1} $h={15}>
            <Tab $w={57}>Настройки</Tab>
            <Tab $w={56}>Результаты</Tab>
            <Tab $active $w={43}>
              График
            </Tab>
            <Tab $w={36}>Отчет</Tab>
            <Tab $w={45}>Журнал</Tab>
          </TabStrip>
        </TesterBody>
      </Tester>

      <StatusBar>
        <StatusCell>Для вызова справки нажмите F1</StatusCell>
        <StatusCell $w={80}>Default</StatusCell>
        <StatusCell $w={71}>2023.02.06 13:00</StatusCell>
        <StatusCell $w={49}>O: 1.07657</StatusCell>
        <StatusCell $w={50}>H: 1.07667</StatusCell>
        <StatusCell $w={47}>L: 1.07625</StatusCell>
        <StatusCell $w={49}>C: 1.07642</StatusCell>
        <StatusCell $w={45}>V: 855</StatusCell>
        <StatusCell $w={91}>
          <svg width="16" height="9" viewBox="0 0 16 9" aria-hidden="true">
            <path d="M0 0h16v3L0 8z" fill="#74902c" />
            <path d="M0 9V8l16-5v6z" fill="#24587c" />
            <path d="M2.500 0v9M5.500 0v9M8.500 0v9M11.500 0v9M14.500 0v9" stroke="#edf0f6" strokeWidth=".6" />
          </svg>
          2238/4 kb
        </StatusCell>
      </StatusBar>
    </Page>
  );
}
